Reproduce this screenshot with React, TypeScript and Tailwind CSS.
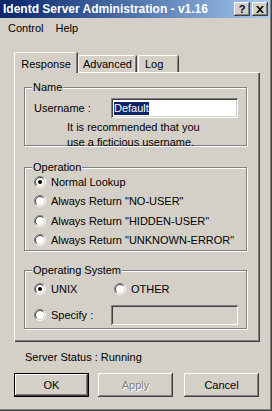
import React from "react";

const raised =
  "shadow-[inset_-1px_-1px_0_#404040,inset_1px_1px_0_#ffffff,inset_-2px_-2px_0_#808080,inset_2px_2px_0_#d4d0c8]";
const sunken =
  "shadow-[inset_1px_1px_0_#808080,inset_-1px_-1px_0_#ffffff,inset_2px_2px_0_#404040,inset_-2px_-2px_0_#d4d0c8]";
const etched = "border border-[#808080] shadow-[inset_1px_1px_0_#ffffff,1px_1px_0_#ffffff]";

function Radio({ checked }: { checked?: boolean }) {
  return (
    <svg width="12" height="12" viewBox="0 0 12 12" className="shrink-0">
      <circle cx="6" cy="6" r="5" fill="#ffffff" />
      <path d="M2.1 9.9A5.5 5.5 0 0 1 9.9 2.1" fill="none" stroke="#808080" />
      <path d="M9.9 2.1A5.5 5.5 0 0 1 2.1 9.9" fill="none" stroke="#ffffff" />
      <path d="M2.8 9.2A4.5 4.5 0 0 1 9.2 2.8" fill="none" stroke="#404040" />
      <path d="M9.2 2.8A4.5 4.5 0 0 1 2.8 9.2" fill="none" stroke="#d4d0c8" />
      {checked ? <circle cx="6" cy="6" r="2" fill="#000000" /> : null}
    </svg>
  );
}

function Group({ label, className, children }: { label: string; className: string; children: React.ReactNode }) {
  return (
    <div className={`relative ${etched} ${className}`}>
      <span className="absolute -top-[8px] left-[7px] bg-[#d4d0c8] px-[1px] leading-[14px]">{label}</span>
      {children}
    </div>
  );
}

function Option({ label, checked }: { label: string; checked?: boolean }) {
  return (
    <div className="flex h-[19.5px] items-center gap-[5px]">
      <Radio checked={checked} />
      <span>{label}</span>
    </div>
  );
}

function Button({ label, isDefault, disabled }: { label: string; isDefault?: boolean; disabled?: boolean }) {
  return (
    <button
      type="button"
      className={`flex h-[24px] w-[75px] items-center justify-center ${
        isDefault ? "border border-black" : ""
      }`}
    >
      <span className={`flex h-full w-full items-center justify-center ${raised}`}>
        <span className={disabled ? "text-[#808080] [text-shadow:1px_1px_0_#ffffff]" : ""}>{label}</span>
      </span>
    </button>
  );
}

export default function App() {
  return (
    <div className="relative h-[411px] w-[272px] overflow-hidden bg-[#d4d0c8] font-['Liberation_Sans',Arial,sans-serif] text-[11px] text-black shadow-[inset_-1px_-1px_0_#404040,inset_-2px_-2px_0_#808080]">
      <div className="mr-[2px] flex h-[18px] items-center justify-between bg-linear-to-r from-[#0a246a] to-[#a6caf0] pl-[3px] pr-[2px]">
        <span className="text-[12px] font-bold text-white">Identd Server Administration - v1.16</span>
        <div className="flex gap-[2px]">
          <span className={`flex h-[14px] w-[16px] items-center justify-center bg-[#d4d0c8] text-[11px] font-bold ${raised}`}>?</span>
          <span className={`flex h-[14px] w-[16px] items-center justify-center bg-[#d4d0c8] ${raised}`}>
            <svg width="8" height="7" viewBox="0 0 8 7">
              <path d="M0 0h2l2 2.3L6 0h2L5 3.5 8 7H6L4 4.7 2 7H0l3-3.5z" fill="#000" />
            </svg>
          </span>
        </div>
      </div>
      <div className="mt-[1px] flex h-[19px] items-center gap-[12px] pl-[8px]">
        <span>Control</span>
        <span>Help</span>
      </div>

      <div className="ml-[14px] mt-[14px] flex h-[20px] items-end">
        <div className="relative z-10 -mb-[1px] flex h-[21px] w-[63px] items-start justify-center rounded-t-[2px] border-l border-t border-white bg-[#d4d0c8] pt-[3px] shadow-[inset_-1px_0_0_#808080,1px_0_0_#404040]">
          Response
        </div>
        <div className="ml-[1px] flex h-[17px] w-[58px] items-center justify-center rounded-t-[2px] border-l border-t border-white shadow-[inset_-1px_0_0_#808080,1px_0_0_#404040]">
          Advanced
        </div>
        <div className="ml-[2px] flex h-[17px] w-[40px] items-center justify-start rounded-t-[2px] border-l border-t border-white pl-[6px] shadow-[inset_-1px_0_0_#808080,1px_0_0_#404040]">
          Log
        </div>
      </div>

      <div className="ml-[14px] h-[269px] w-[245px] border-l border-t border-white px-[9px] pt-[14px] shadow-[inset_-1px_-1px_0_#808080,1px_1px_0_#404040]">
        <Group label="Name" className="h-[59px] w-[223px]">
          <div className="flex items-center pl-[9px] pt-[10px]">
            <span className="w-[77px]">Username :</span>
            <div className={`flex h-[20px] w-[127px] items-center bg-white pl-[3px] ${sunken}`}>
              <span className="bg-[#0a246a] text-white leading-[13px]">Default</span>
            </div>
          </div>
          <div className="pl-[42px] pt-[2px] leading-[15px]">
            <div>It is recommended that you</div>
            <div>use a ficticious username.</div>
          </div>
        </Group>

        <Group label="Operation" className="mt-[21px] h-[84px] w-[223px]">
          <div className="pl-[9px] pt-[4px]">
            <Option label="Normal Lookup" checked />
            <Option label={'Always Return "NO-USER"'} />
            <Option label={'Always Return "HIDDEN-USER"'} />
            <Option label={'Always Return "UNKNOWN-ERROR"'} />
          </div>
        </Group>

        <Group label="Operating System" className="mt-[19px] h-[59px] w-[223px]">
          <div className="pl-[9px] pt-[9px]">
            <div className="flex h-[18px] items-center">
              <div className="flex w-[80px] items-center gap-[5px]">
                <Radio checked />
                <span>UNIX</span>
              </div>
              <div className="flex items-center gap-[5px]">
                <Radio />
                <span>OTHER</span>
              </div>
            </div>
            <div className="mt-[7px] flex items-center">
              <div className="flex w-[77px] items-center gap-[5px]">
                <Radio />
                <span>Specify :</span>
              </div>
              <div className={`h-[20px] w-[127px] bg-[#d4d0c8] ${sunken}`} />
            </div>
          </div>
        </Group>
      </div>

      <div className="ml-[25px] mt-[9px] leading-[14px]">Server Status : Running</div>

      <div className="ml-[14px] mt-[9px] flex gap-[9px]">
        <Button label="OK" isDefault />
        <Button label="Apply" disabled />
        <div className="ml-[2px]">
          <Button label="Cancel" />
        </div>
      </div>
    </div>
  );
}
